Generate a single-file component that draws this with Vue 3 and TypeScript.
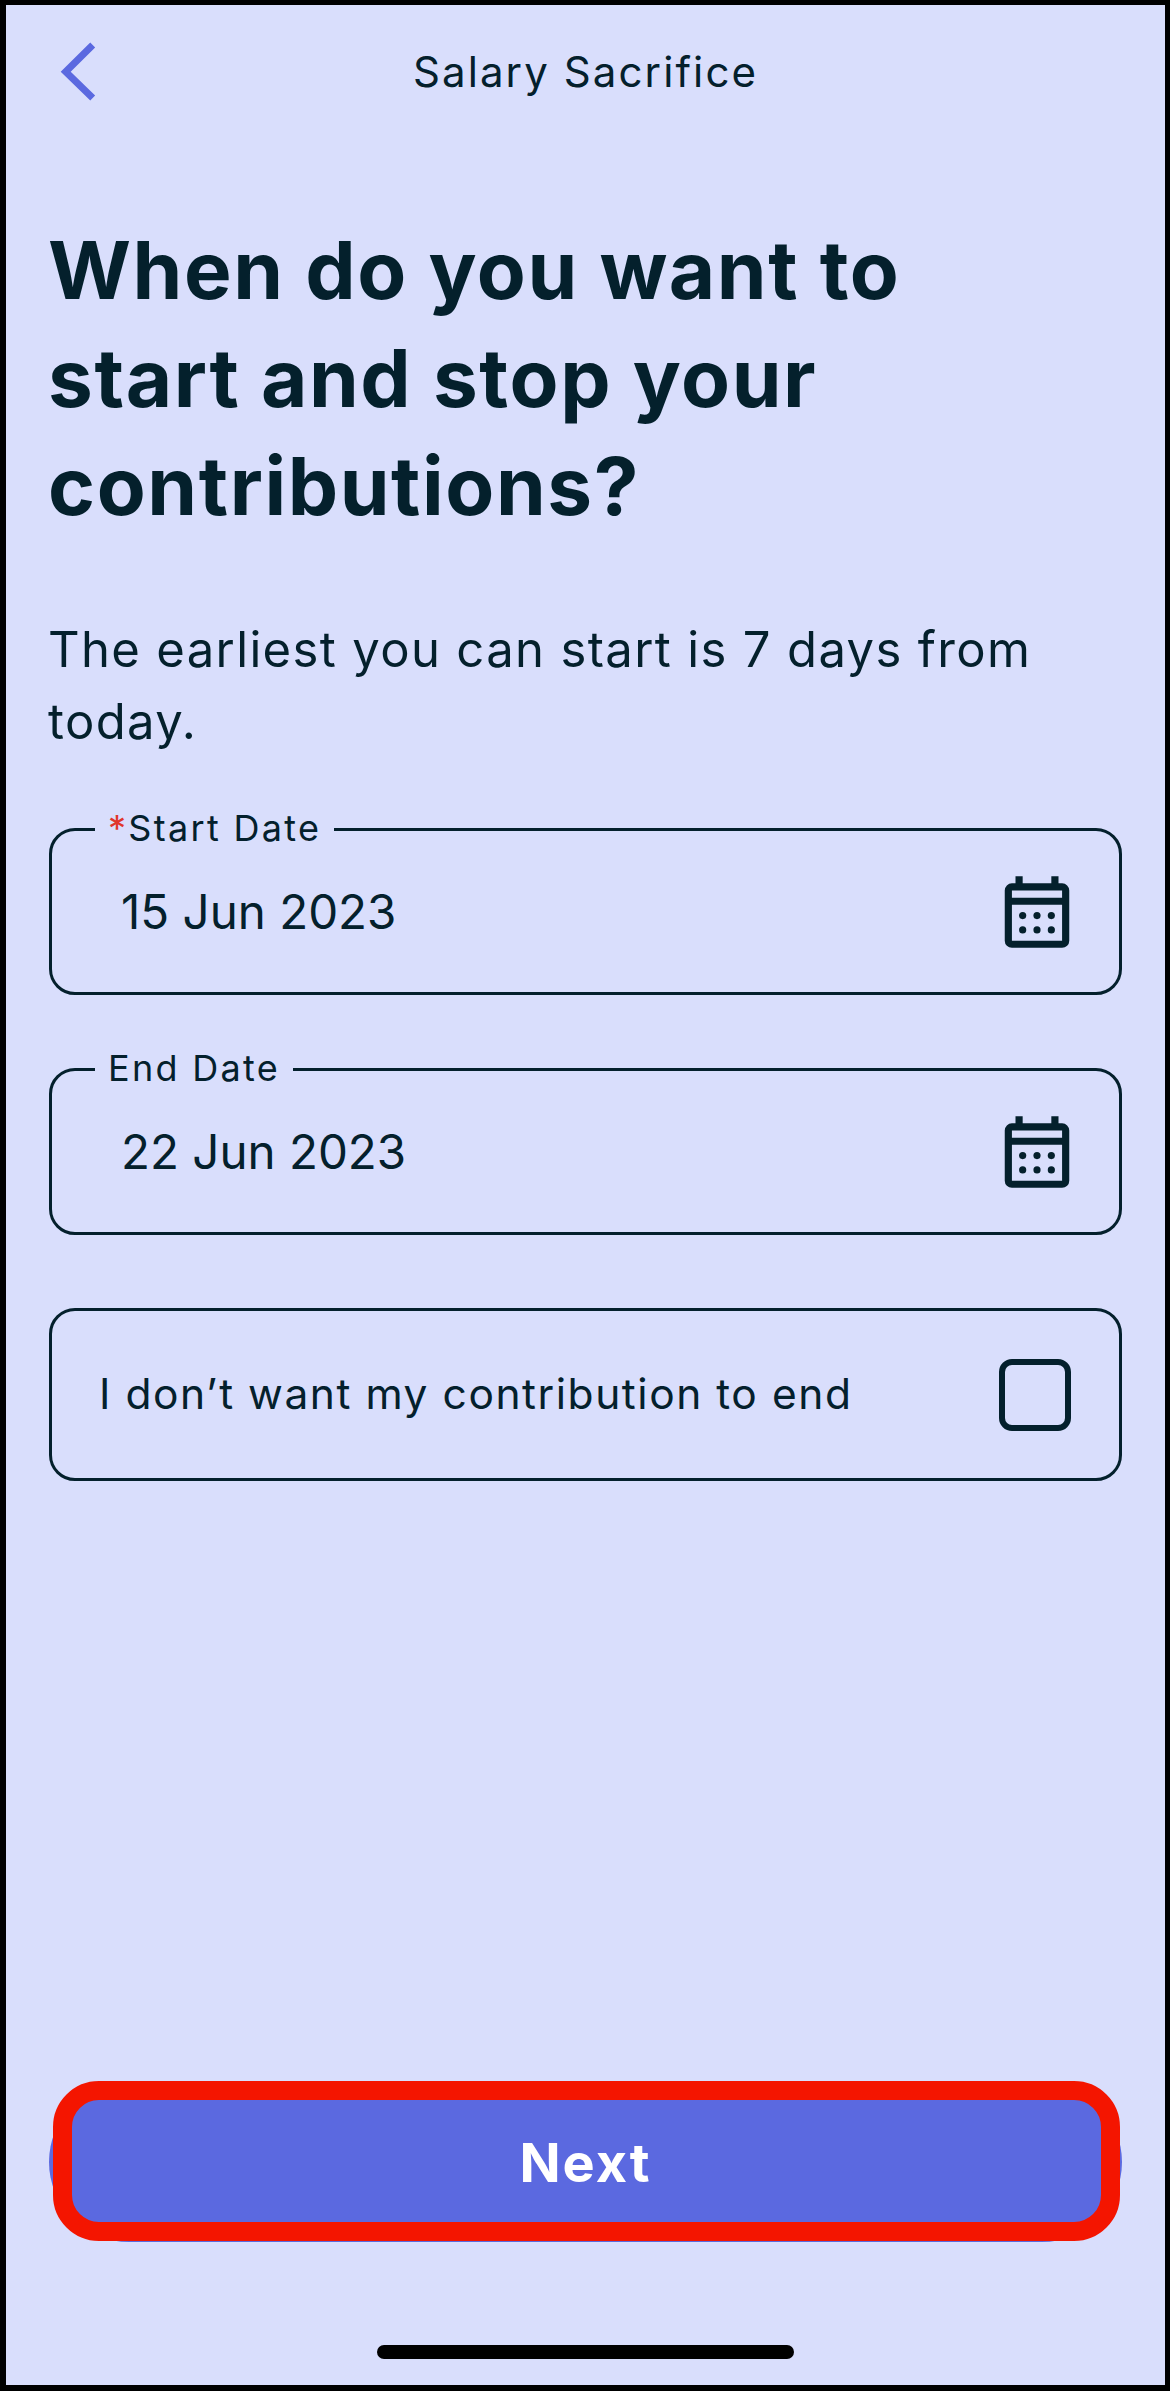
<script setup lang="ts">
const fields = [
  { label: 'Start Date', value: '15 Jun 2023', required: true },
  { label: 'End Date', value: '22 Jun 2023', required: false },
]
const dots = [
  [8, 13], [12, 13], [16, 13],
  [8, 17], [12, 17], [16, 17],
]
</script>

<template>
  <div class="screen">
    <header class="top-bar">
      <button class="back" aria-label="Back">
        <svg width="50" height="64" viewBox="0 0 50 64" fill="none">
          <path d="M43.700 6L16.700 32.700L43.700 59" stroke="#5b69e0" stroke-width="7" />
        </svg>
      </button>
      <span class="top-title">Salary Sacrifice</span>
    </header>

    <h1 class="heading">When do you want to<br />start and stop your<br />contributions?</h1>
    <p class="intro">The earliest you can start is 7 days from today.</p>

    <div class="fields">
      <div v-for="f in fields" :key="f.label" class="field">
        <span class="field-label"><i v-if="f.required" class="star">*</i>{{ f.label }}</span>
        <span class="field-value">{{ f.value }}</span>
        <svg width="86" height="86" viewBox="0 0 24 24">
          <path fill="#04202c" d="M19 4h-1V2h-2v2H8V2H6v2H5a2 2 0 0 0-2 2v14a2 2 0 0 0 2 2h14a2 2 0 0 0 2-2V6a2 2 0 0 0-2-2zm0 16H5V10h14v10zm0-12H5V6h14v2z" />
          <circle v-for="d in dots" :key="d.join()" :cx="d[0]" :cy="d[1]" r="1" fill="#04202c" />
        </svg>
      </div>

      <div class="field check-row">
        <span class="check-label">I don’t want my contribution to end</span>
        <span class="checkbox"></span>
      </div>
    </div>

    <div class="next-wrap">
      <button class="next">Next</button>
      <span class="highlight"></span>
    </div>

    <div class="home-bar"></div>
  </div>
</template>

<style>
body {
  margin: 0;
}
</style>

<style scoped>
.screen {
  box-sizing: border-box;
  width: 1170px;
  height: 2391px;
  display: flex;
  flex-direction: column;
  padding: 0 43px;
  border-style: solid;
  border-color: #000;
  border-width: 5px 5px 6px 6px;
  background: #d9defc;
  color: #04202c;
  font-family: "Inter", "Liberation Sans", sans-serif;
}

.top-bar {
  position: relative;
  display: flex;
  align-items: center;
  justify-content: center;
  height: 64px;
  margin-top: 34px;
}

.back {
  position: absolute;
  left: 0;
  top: 0;
  padding: 0;
  border: none;
  background: none;
}

.back svg {
  display: block;
}

.top-title {
  font-size: 42px;
  letter-spacing: 2.100px;
}

.heading {
  margin: 113px 0 0 -1px;
  font-size: 80px;
  font-weight: 700;
  line-height: 108px;
  letter-spacing: 1.600px;
}

.intro {
  margin: 74px 0 0 -1px;
  font-size: 49px;
  line-height: 72px;
  letter-spacing: 1.350px;
}

.fields {
  display: flex;
  flex-direction: column;
  gap: 73px;
  margin-top: 70px;
}

.field {
  position: relative;
  box-sizing: border-box;
  display: flex;
  align-items: center;
  justify-content: space-between;
  height: 167px;
  padding: 0 39px 0 69px;
  border: 3px solid #04202c;
  border-radius: 26px;
}

.field-label {
  position: absolute;
  left: 43px;
  top: -23px;
  padding: 0 13px;
  background: #d9defc;
  font-size: 36px;
  line-height: 40px;
  letter-spacing: 2.300px;
}

.star {
  color: #e0352b;
  font-style: normal;
}

.field-value {
  font-size: 47.500px;
}

.check-row {
  height: 173px;
  padding: 0 48px 0 47px;
}

.check-label {
  margin-bottom: 2px;
  font-size: 42.500px;
  letter-spacing: 1.550px;
}

.checkbox {
  box-sizing: border-box;
  width: 72px;
  height: 72px;
  border: 6px solid #04202c;
  border-radius: 13px;
}

.next-wrap {
  position: relative;
  margin-top: auto;
}

.next {
  display: block;
  width: 100%;
  height: 160px;
  border: none;
  border-radius: 80px;
  background: #5b69e0;
  color: #fff;
  font-family: inherit;
  font-size: 54px;
  font-weight: 700;
  letter-spacing: 2px;
}

.highlight {
  position: absolute;
  inset: -1px 2px 1px 4px;
  box-sizing: border-box;
  border: 19px solid #f41500;
  border-radius: 46px;
  pointer-events: none;
}

.home-bar {
  align-self: center;
  width: 417px;
  height: 14px;
  margin: 103px 0 26px;
  border-radius: 7px;
  background: #000;
}
</style>
